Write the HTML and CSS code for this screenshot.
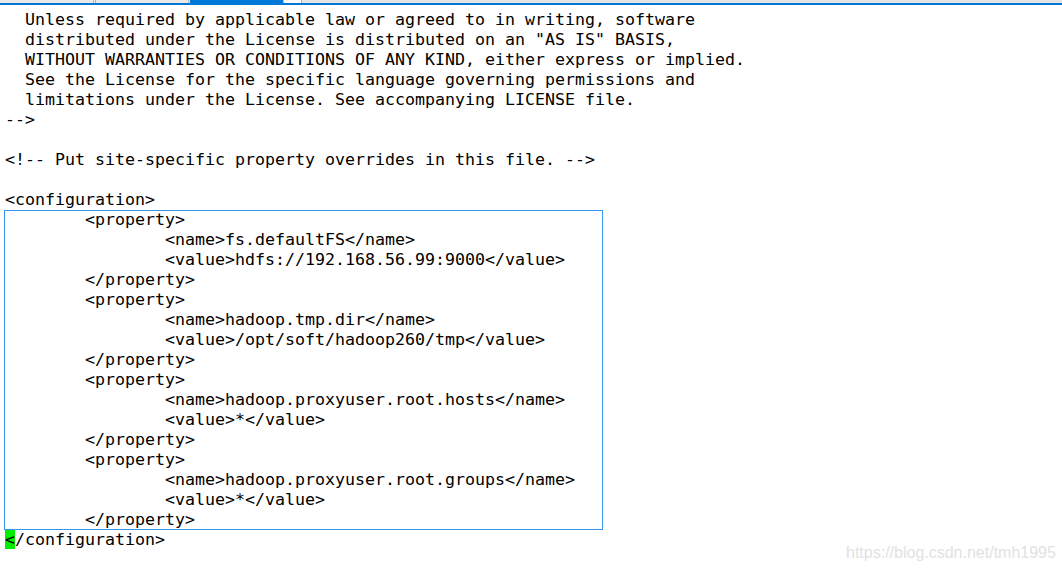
FILE: index.html
```html
<!DOCTYPE html>
<html>
<head>
<meta charset="utf-8">
<link rel="stylesheet" href="styles.css">
</head>
<body>
<div class="tabs">
  <div class="tab t1"></div>
  <div class="tab t2"></div>
  <div class="tab active"></div>
  <div class="tab small"></div>
  <div class="tab rest"></div>
</div>
<div class="bar"></div>
<div class="editor">
<pre class="code">  Unless required by applicable law or agreed to in writing, software
  distributed under the License is distributed on an "AS IS" BASIS,
  WITHOUT WARRANTIES OR CONDITIONS OF ANY KIND, either express or implied.
  See the License for the specific language governing permissions and
  limitations under the License. See accompanying LICENSE file.
--&gt;

&lt;!-- Put site-specific property overrides in this file. --&gt;

&lt;configuration&gt;</pre>
<pre class="code sel">        &lt;property&gt;
                &lt;name&gt;fs.defaultFS&lt;/name&gt;
                &lt;value&gt;hdfs://192.168.56.99:9000&lt;/value&gt;
        &lt;/property&gt;
        &lt;property&gt;
                &lt;name&gt;hadoop.tmp.dir&lt;/name&gt;
                &lt;value&gt;/opt/soft/hadoop260/tmp&lt;/value&gt;
        &lt;/property&gt;
        &lt;property&gt;
                &lt;name&gt;hadoop.proxyuser.root.hosts&lt;/name&gt;
                &lt;value&gt;*&lt;/value&gt;
        &lt;/property&gt;
        &lt;property&gt;
                &lt;name&gt;hadoop.proxyuser.root.groups&lt;/name&gt;
                &lt;value&gt;*&lt;/value&gt;
        &lt;/property&gt;</pre>
<pre class="code"><span class="cursor">&lt;</span>/configuration&gt;</pre>
</div>
<div class="watermark">https://blog.csdn.net/tmh1995</div>
</body>
</html>
```

FILE: styles.css
```css
html, body {
  margin: 0;
  padding: 0;
  background: #ffffff;
}
body {
  position: relative;
  width: 1062px;
  height: 573px;
  overflow: hidden;
}
.tabs {
  display: flex;
  height: 3px;
  background: #e6e6e6;
}
.tab {
  height: 3px;
  background: #e9e9e9;
}
.t1 {
  width: 93px;
  border-right: 1px solid #b5b5b5;
  margin-right: 1px;
}
.t2 {
  width: 92px;
  border-left: 1px solid #b5b5b5;
  border-right: 1px solid #b5b5b5;
  margin-right: 1px;
}
.active {
  width: 93px;
  background: #0078d7;
  border-right: 1px solid #b5b5b5;
}
.small {
  width: 17px;
  background: #fbfbfb;
  border-right: 1px solid #b5b5b5;
}
.rest {
  flex: 1;
  background: #e4e4e4;
}
.bar {
  height: 2px;
  background: #0078d7;
}
.editor {
  padding: 5px 0 0 5px;
}
.code {
  margin: 0;
  font-family: "DejaVu Sans Mono", monospace;
  font-size: 16.61px;
  line-height: 20px;
  color: #000000;
  white-space: pre;
}
.sel {
  margin-left: -1px;
  padding-left: 1px;
  width: 598px;
  box-shadow: inset 0 0 0 1px #3797ea;
}
.cursor {
  background: #00ee00;
}
.watermark {
  position: absolute;
  left: 846px;
  top: 543px;
  font-family: "Liberation Sans", Arial, sans-serif;
  font-size: 16px;
  line-height: 20px;
  color: #e2e2e2;
}
```
